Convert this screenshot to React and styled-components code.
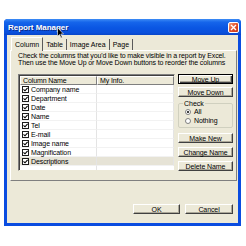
import React from "react";
import styled, { createGlobalStyle } from "styled-components";

const Global = createGlobalStyle`
  * { box-sizing: border-box; }
  html, body { margin: 0; padding: 0; background: #ffffff; }
  body { font-family: "Liberation Sans", Arial, sans-serif; font-size: 7px; color: #000; }
`;

const Stage = styled.div`
  position: relative;
  width: 246px;
  height: 246px;
  padding: 19px 0 0 4px;
`;

const Window = styled.div`
  width: 237px;
  height: 207px;
  display: flex;
  flex-direction: column;
  border-radius: 4px 4px 0 0;
  overflow: hidden;
  background: #0a4ce0;
`;

const TitleBar = styled.div`
  height: 16px;
  flex: none;
  display: flex;
  align-items: center;
  justify-content: space-between;
  padding: 0 2px 0 4px;
  background: linear-gradient(#3d8cf5 0%, #1565eb 20%, #0a56e3 55%, #0a50dc 85%, #0845c8 100%);
`;

const Title = styled.span`
  color: #ffffff;
  font-weight: bold;
  font-size: 8px;
  letter-spacing: -0.05px;
  text-shadow: 1px 1px 0 #0a2a8a;
`;

const CloseBox = styled.div`
  width: 11px;
  height: 11px;
  border: 1px solid #ffffff;
  border-radius: 2px;
  background: linear-gradient(135deg, #f2a07e, #e0502a 50%, #c8381a);
  display: flex;
  align-items: center;
  justify-content: center;
`;

const Body = styled.div`
  flex: 1;
  margin: 0 3px 3px 3px;
  background: #ece9d8;
  display: flex;
  flex-direction: column;
  padding: 2px 1px 0 3px;
`;

const Tabs = styled.div`
  display: flex;
  align-items: flex-end;
  height: 13px;
  padding-left: 1px;
`;

const Tab = styled.div`
  height: 11px;
  padding: 0 3px;
  display: flex;
  align-items: center;
  border-right: 1px solid #5a5a5a;
  ${p => p.$active ? `
    border-left: 1px solid #ffffff;
    border-top: 1px solid #ffffff;
    background: #ece9d8;
    margin-bottom: -1px;
    height: 14px;
    position: relative;
    z-index: 1;
  ` : ``}
`;

const Panel = styled.div`
  height: 131px;
  border: 1px solid #919b9c;
  border-top-color: #ffffff;
  border-left-color: #ffffff;
  border-right-color: #7f7f7f;
  border-bottom-color: #7f7f7f;
  display: flex;
  flex-direction: column;
  padding: 1px 3px 0 7px;
`;

const Hint = styled.div`
  line-height: 7px;
  letter-spacing: -0.12px;
  white-space: nowrap;
  color: #000;
`;

const Content = styled.div`
  display: flex;
  gap: 3px;
  margin-top: 8px;
`;

const ListBox = styled.div`
  width: 157px;
  height: 97px;
  background: #ffffff;
  border: 1px solid #7f7f7f;
  border-right-color: #ece9d8;
  border-bottom-color: #ece9d8;
  box-shadow: inset 1px 1px 0 #404040;
  overflow: hidden;
  display: flex;
  flex-direction: column;
  padding: 1px 0 0 1px;
`;

const Row = styled.div`
  display: grid;
  grid-template-columns: 77px 1fr;
  height: 9px;
  flex: none;
  background: ${p => (p.$selected ? "#e6e3d6" : "#ffffff")};
`;

const HeadCell = styled.div`
  height: 9px;
  background: #ece9d8;
  border-top: 1px solid #ffffff;
  border-left: 1px solid #ffffff;
  border-right: 1px solid #7f7f7f;
  border-bottom: 1px solid #7f7f7f;
  display: flex;
  align-items: center;
  padding-left: 2px;
  line-height: 7px;
  letter-spacing: -0.1px;
`;

const Cell = styled.div`
  display: flex;
  align-items: center;
  gap: 2px;
  padding-left: 2px;
  border-right: 1px solid #e4e4e4;
  border-bottom: 1px solid #f2f2f2;
  letter-spacing: -0.1px;
  line-height: 7px;
  white-space: nowrap;
`;

const Filler = styled.div`
  flex: 1;
  display: grid;
  grid-template-columns: 77px 1fr;
`;

const FillCol = styled.div`
  border-right: 1px solid #e4e4e4;
`;

const Check = styled.div`
  width: 7px;
  height: 7px;
  flex: none;
  border: 1px solid #1c1c1c;
  background: #ffffff;
  display: flex;
  align-items: center;
  justify-content: center;
`;

const Side = styled.div`
  width: 55px;
  display: flex;
  flex-direction: column;
`;

const Button = styled.div`
  height: 10px;
  flex: none;
  display: flex;
  align-items: center;
  justify-content: center;
  background: #ece9d8;
  border: 1px solid #ffffff;
  border-right-color: #404040;
  border-bottom-color: #404040;
  box-shadow: inset -1px -1px 0 #aca899;
  letter-spacing: -0.1px;
  line-height: 7px;
  margin-top: ${p => p.$mt || 0}px;
  width: ${p => p.$w || "auto"};
  ${p => p.$default ? `
    outline: 1px solid #000000;
    outline-offset: -1px;
    box-shadow: inset 1px 1px 0 #ffffff, inset -1px -1px 0 #404040, inset -2px -2px 0 #aca899;
  ` : ``}
`;

const Group = styled.fieldset`
  margin: 3px 0 0 0;
  padding: 1px 0 0 6px;
  height: 28px;
  border: 1px solid #d0d0bf;
  border-radius: 2px;
  display: flex;
  flex-direction: column;
  gap: 2px;
`;

const Legend = styled.legend`
  padding: 0 1px;
  margin-left: -2px;
  line-height: 7px;
  font-size: 7px;
`;

const Radio = styled.label`
  display: flex;
  align-items: center;
  gap: 3px;
  line-height: 7px;
  letter-spacing: -0.1px;
`;

const Dot = styled.span`
  width: 6px;
  height: 6px;
  border-radius: 50%;
  border: 1px solid #808080;
  background: #ffffff;
  display: flex;
  align-items: center;
  justify-content: center;
  &::after {
    content: "";
    width: 2px;
    height: 2px;
    border-radius: 50%;
    background: ${p => (p.$on ? "#000" : "transparent")};
  }
`;

const Footer = styled.div`
  display: flex;
  justify-content: flex-end;
  gap: 5px;
  padding: 23px 4px 0 0;
`;

const Cursor = styled.svg`
  position: absolute;
  left: 57px;
  top: 27px;
`;

const rows = [
  "Company name",
  "Department",
  "Date",
  "Name",
  "Tel",
  "E-mail",
  "Image name",
  "Magnification",
  "Descriptions",
];

const Tick = () => (
  <svg width="5" height="5" viewBox="0 0 5 5">
    <path d="M0.5 2.3 L2 3.8 L4.6 0.9" fill="none" stroke="#000" strokeWidth="1.1" />
  </svg>
);

export default function App() {
  return (
    <>
      <Global />
      <Stage>
        <Window>
          <TitleBar>
            <Title>Report Manager</Title>
            <CloseBox>
              <svg width="7" height="7" viewBox="0 0 7 7">
                <path d="M1 1 L6 6 M6 1 L1 6" stroke="#fff" strokeWidth="1.4" />
              </svg>
            </CloseBox>
          </TitleBar>
          <Body>
            <Tabs>
              <Tab $active>Column</Tab>
              <Tab>Table</Tab>
              <Tab>Image Area</Tab>
              <Tab>Page</Tab>
            </Tabs>
            <Panel>
              <Hint>Check the columns that you'd like to make visible in a report by Excel.</Hint>
              <Hint>Then use the Move Up or Move Down buttons to reorder the columns</Hint>
              <Content>
                <ListBox>
                  <Row>
                    <HeadCell>Column Name</HeadCell>
                    <HeadCell>My Info.</HeadCell>
                  </Row>
                  {rows.map((r, i) => (
                    <Row key={r} $selected={i === rows.length - 1}>
                      <Cell>
                        <Check><Tick /></Check>
                        {r}
                      </Cell>
                      <Cell />
                    </Row>
                  ))}
                  <Filler>
                    <FillCol />
                    <div />
                  </Filler>
                </ListBox>
                <Side>
                  <Button $default>Move Up</Button>
                  <Button $mt={3}>Move Down</Button>
                  <Group>
                    <Legend>Check</Legend>
                    <Radio><Dot $on />All</Radio>
                    <Radio><Dot />Nothing</Radio>
                  </Group>
                  <Button $mt={5}>Make New</Button>
                  <Button $mt={4}>Change Name</Button>
                  <Button $mt={4}>Delete Name</Button>
                </Side>
              </Content>
            </Panel>
            <Footer>
              <Button $w="47px">OK</Button>
              <Button $w="48px">Cancel</Button>
            </Footer>
          </Body>
        </Window>
        <Cursor width="7" height="12" viewBox="0 0 7 12">
          <path d="M0.5 0.5 L0.5 9.5 L2.5 7.5 L4 11 L5.3 10.4 L3.8 7 L6.5 7 Z" fill="#000" stroke="#fff" strokeWidth="0.6" />
        </Cursor>
      </Stage>
    </>
  );
}
